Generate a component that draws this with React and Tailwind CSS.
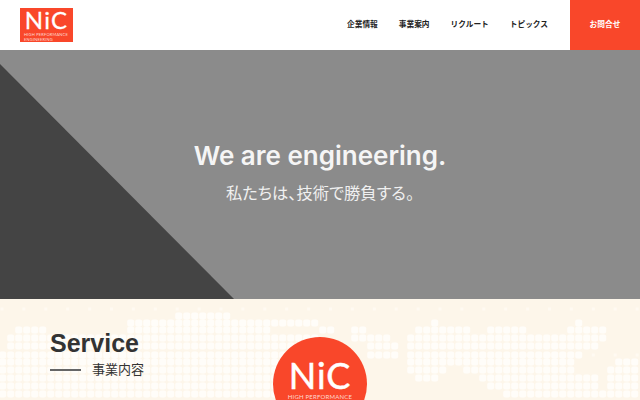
import React from 'react';

const navItems = ['企業情報', '事業案内', 'リクルート', 'トピックス'];

// dotted world map: [y, [x from, x to], ...]
const mapRows = [
  [316, [178, 226]],
  [323, [130, 320], [435, 436], [572, 580]],
  [330, [18, 46], [130, 268], [323, 333], [348, 365], [418, 468], [490, 527], [570, 605]],
  [338, [10, 320], [353, 392], [410, 605]],
  [346, [10, 320], [370, 398], [410, 597]],
  [355, [2, 320], [370, 398], [410, 583]],
  [362, [2, 320], [410, 573], [613, 637]],
  [370, [2, 320], [410, 447], [467, 573], [610, 640]],
  [378, [2, 320], [417, 440], [483, 597], [610, 640]],
  [386, [2, 320], [490, 597], [610, 640]],
  [394, [2, 320], [500, 640]],
];

const faintDots = [309, 355].flatMap((y) =>
  Array.from({ length: 30 }, (_, i) => [i * 21.9 + 2, y])
);

const WorldMap = () => {
  const cells = [];
  mapRows.forEach(([y, ...ranges]) => {
    ranges.forEach(([from, to]) => {
      for (let c = 0; c < 80; c++) {
        const x = 2.7 + c * 8;
        if (x >= from - 1 && x <= to + 1) cells.push([x, y]);
      }
    });
  });
  return (
    <svg className="absolute left-0 top-[-299px] h-[400px] w-[640px]" viewBox="0 0 640 400">
      {faintDots.map(([x, y], i) => (
        <rect key={i} x={x - 1.5} y={y - 1.5} width="3" height="3" fill="#fffaf2" />
      ))}
      {cells.map(([x, y], i) => (
        <rect key={i} x={x - 3.5} y={y - 3.5} width="7" height="7" rx="2" fill="#fffdf9" />
      ))}
    </svg>
  );
};

const Logo = () => (
  <div className="flex h-[34px] w-[53px] flex-col items-center bg-[#f9472a] text-white">
    <span className="mt-[1px] h-[22px] font-['Lato'] text-[24px] leading-[22px] tracking-[1.2px] [-webkit-text-stroke:0.3px_white]">NiC</span>
    <span className="mt-[1px] w-full pl-[4px] font-['Lato'] text-[4px] leading-[5px] tracking-[0.2px] text-[#ffd9d0]">HIGH PERFORMANCE ENGINEERING</span>
  </div>
);

export default function App() {
  return (
    <div className="h-[400px] w-[640px] overflow-hidden bg-white font-['Liberation_Sans','Noto_Sans_CJK_JP',sans-serif]">
      <header className="flex h-[50px] items-center bg-white pl-[20px]">
        <Logo />
        <nav className="ml-auto flex items-center gap-[21px] pr-[22px]">
          {navItems.map((item) => (
            <a key={item} className="text-[7.7px] font-bold leading-[12px] text-[#222]">{item}</a>
          ))}
        </nav>
        <a className="flex h-full w-[70px] items-center justify-center bg-[#f9472a] text-[7.7px] font-bold text-white">お問合せ</a>
      </header>

      <section className="relative flex h-[249px] flex-col items-center bg-[#8b8b8b] pt-[88px]">
        <div className="absolute bottom-0 left-0 h-[235px] w-[234px] bg-[#444444] [clip-path:polygon(0_0,100%_100%,0_100%)]" />
        <h1 className="relative font-['Inter'] text-[26px] font-semibold leading-[36px] text-[#f5f5f5]">We are engineering.</h1>
        <p className="relative mt-[6px] font-['Noto_Sans_CJK_JP'] text-[16.3px] leading-[24px] text-[#f0f0f0] [font-feature-settings:'palt']">私たちは、技術で勝負する。</p>
      </section>

      <section className="relative grid h-[101px] grid-cols-[1fr_94px_1fr] overflow-hidden bg-[#fdf6ea]">
        <WorldMap />
        <div className="relative pl-[50px] pt-[29px]">
          <h2 className="text-[25px] font-bold leading-[30px] text-[#333333]">Service</h2>
          <div className="mt-[2px] flex items-center gap-[11px]">
            <span className="h-[2px] w-[31px] bg-[#666666]" />
            <span className="text-[13px] leading-[20px] text-[#333333]">事業内容</span>
          </div>
        </div>
        <div className="relative mt-[38px] flex h-[94px] w-[94px] flex-col items-center rounded-full bg-[#f9472a] text-white">
          <span className="mt-[21px] h-[34px] font-['Lato'] text-[36px] leading-[34px] tracking-[1px] [-webkit-text-stroke:0.5px_white]">NiC</span>
          <span className="mt-[1px] whitespace-nowrap font-['Lato'] text-[6px] leading-[7px] tracking-[0.2px] text-[#ffd9d0]">HIGH PERFORMANCE</span>
        </div>
      </section>
    </div>
  );
}
